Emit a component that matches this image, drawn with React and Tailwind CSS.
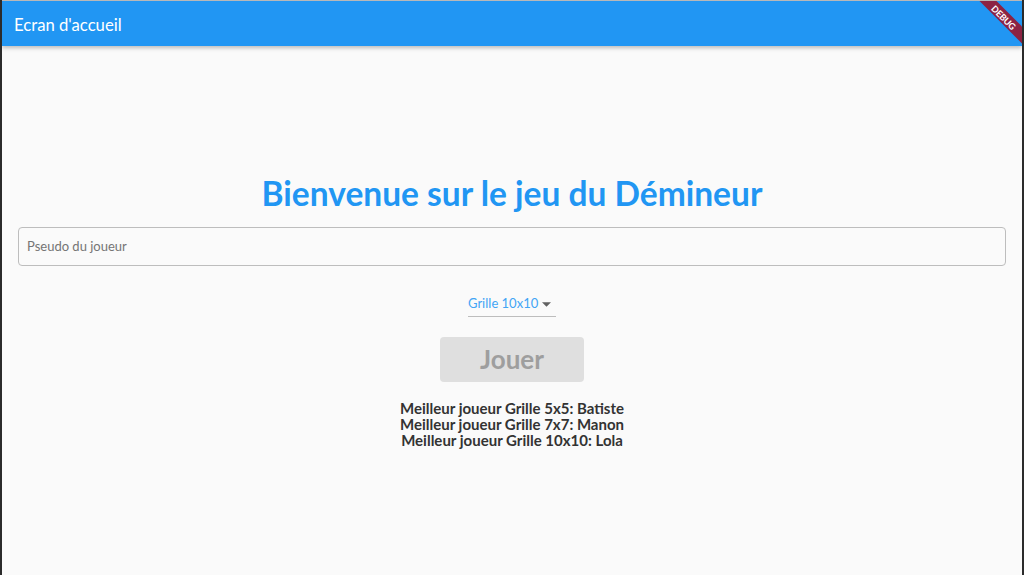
import React from "react";

export default function App() {
  return (
    <div className="w-[1024px] h-[575px] overflow-hidden bg-[#2b2b2b] flex flex-col" style={{ fontFamily: "Lato, 'Noto Sans', sans-serif" }}>
      <div className="h-[1px] bg-[#b8b8b8] mx-[2px]" />
      <div className="flex-1 mx-[2px] mr-[2px] bg-[#fafafa] flex flex-col relative overflow-hidden">
        <div className="h-[45px] bg-[#2196f3] flex items-center pl-[12px] pt-[3px] shadow-[0_2px_4px_rgba(0,0,0,0.25)] z-10">
          <span className="text-white text-[16.7px] leading-none">Ecran d'accueil</span>
        </div>
        <div className="absolute top-0 right-0 w-[60px] h-[60px] overflow-hidden pointer-events-none z-20">
          <div className="absolute top-[10px] right-[-22px] w-[80px] h-[12px] rotate-45 bg-[#8c2343] flex items-center justify-center">
            <span className="text-white text-[9px] font-bold leading-none tracking-tight">DEBUG</span>
          </div>
        </div>
        <div className="flex-1 flex flex-col items-center justify-center px-[16px]">
          <h1 className="text-[#2196f3] text-[33.5px] font-bold leading-[40px]">Bienvenue sur le jeu du Démineur</h1>
          <div className="w-full mt-[14px] h-[39px] border border-[#bdbdbd] rounded-[4px] flex items-center px-[8px]">
            <span className="text-[#757575] text-[13px]">Pseudo du joueur</span>
          </div>
          <div className="mt-[26px] w-[88px] border-b border-[#bdbdbd] h-[25px] flex items-center justify-between">
            <span className="text-[#42a5f5] text-[13px]">Grille 10x10</span>
            <svg width="9" height="5" viewBox="0 0 10 5" className="mr-[5px]"><path d="M0 0 L10 0 L5 5 Z" fill="#616161" /></svg>
          </div>
          <div className="mt-[20px] w-[144px] h-[45px] bg-[#dfdfdf] rounded-[4px] flex items-center justify-center">
            <span className="text-[#9e9e9e] text-[26px] font-bold">Jouer</span>
          </div>
          <div className="mt-[18px] flex flex-col items-center text-[#333333] text-[15px] font-bold leading-[16px]">
            <span>Meilleur joueur Grille 5x5: Batiste</span>
            <span>Meilleur joueur Grille 7x7: Manon</span>
            <span>Meilleur joueur Grille 10x10: Lola</span>
          </div>
        </div>
      </div>
    </div>
  );
}
